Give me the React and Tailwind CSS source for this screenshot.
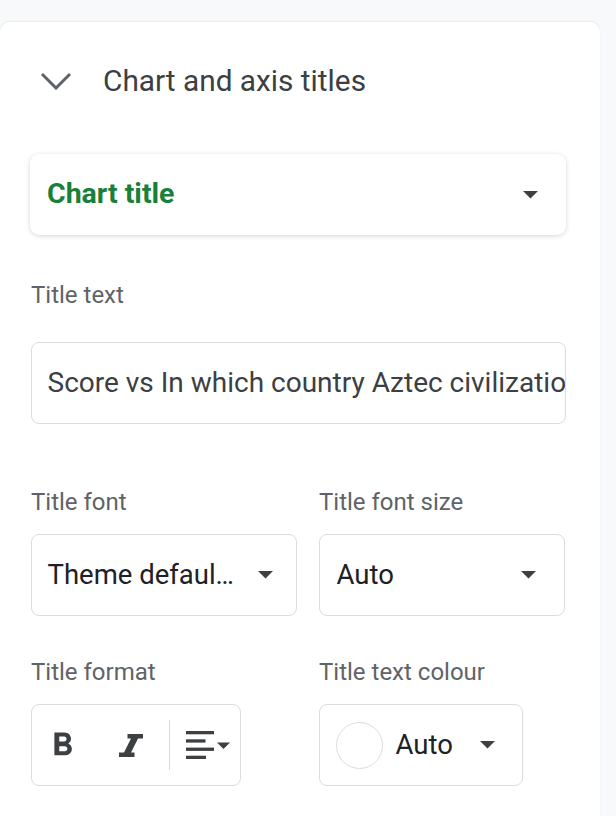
function Caret({ className = "" }) {
  return (
    <svg width="15" height="8" viewBox="0 0 15 8" className={className}>
      <path d="M0 0H15L7.5 7.5Z" fill="#3c4043" />
    </svg>
  );
}

export default function App() {
  return (
    <div className="min-h-[816px] w-[616px] bg-[#f8f9fa] pt-[22px] font-['Roboto',sans-serif]">
      <div className="w-[600px] h-[794px] bg-white rounded-t-[10px] shadow-[0_-1px_2px_rgba(0,0,0,0.06)] pl-[31px] pr-[34px] pt-[31px]">
        {/* Header */}
        <div className="flex items-center h-[56px]">
          <svg width="32" height="18" viewBox="0 0 32 18" className="ml-[9px]">
            <path d="M2 2L16 16L30 2" fill="none" stroke="#5f6368" strokeWidth="3" />
          </svg>
          <span className="ml-[31px] text-[29.8px] leading-[56px] text-[#3c4043]">Chart and axis titles</span>
        </div>

        {/* Chart title select */}
        <div className="-ml-px mt-[45px] w-[536px] h-[81px] rounded-[9px] bg-white shadow-[0_1px_4px_rgba(60,64,67,0.22)] flex items-center justify-between pl-[17px] pr-[28px]">
          <span className="text-[28.5px] font-bold text-[#188038]">Chart title</span>
          <Caret />
        </div>

        {/* Title text */}
        <div className="mt-[46px] h-[28px] leading-[28px] text-[24px] text-[#5f6368]">Title text</div>
        <div className="mt-[33px] w-[535px] h-[82px] rounded-[8px] border-[1.5px] border-[#dadce0] flex items-center pl-[15.5px] overflow-hidden">
          <span className="whitespace-nowrap text-[28px] text-[#3c4043]">Score vs In which country Aztec civilizatio</span>
        </div>

        {/* Font row */}
        <div className="mt-[64px] grid grid-cols-[266px_246px] gap-x-[22px]">
          <div>
            <div className="h-[28px] leading-[28px] text-[24px] text-[#5f6368]">Title font</div>
            <div className="mt-[18px] h-[82px] rounded-[8px] border-[1.5px] border-[#dadce0] flex items-center justify-between pl-[15.5px] pr-[23px]">
              <span className="whitespace-nowrap text-[27.5px] text-[#202124]">Theme defaul…</span>
              <Caret />
            </div>
          </div>
          <div>
            <div className="h-[28px] leading-[28px] text-[24px] text-[#5f6368]">Title font size</div>
            <div className="mt-[18px] h-[82px] rounded-[8px] border-[1.5px] border-[#dadce0] flex items-center justify-between pl-[16.5px] pr-[28px]">
              <span className="text-[27.5px] text-[#202124]">Auto</span>
              <Caret />
            </div>
          </div>
        </div>

        {/* Format row */}
        <div className="mt-[42px] grid grid-cols-[266px_246px] gap-x-[22px]">
          <div>
            <div className="h-[28px] leading-[28px] text-[24px] text-[#5f6368]">Title format</div>
            <div className="mt-[18px] w-[210px] h-[82px] rounded-[8px] border-[1.5px] border-[#dadce0] flex items-center">
              <svg width="39" height="39" viewBox="0 0 24 24" className="ml-[11px]">
                <path
                  fill="#3c4043"
                  d="M15.6 10.79c.97-.67 1.65-1.77 1.65-2.79 0-2.26-1.75-4-4-4H7v14h7.04c2.09 0 3.71-1.7 3.71-3.79 0-1.52-.86-2.82-2.15-3.42zM10 6.5h3c.83 0 1.5.67 1.5 1.5s-.67 1.5-1.5 1.5h-3v-3zm3.5 9H10v-3h3.5c.83 0 1.5.67 1.5 1.5s-.67 1.5-1.5 1.5z"
                />
              </svg>
              <svg width="24" height="23" viewBox="0 0 24 23" className="ml-[36.5px]">
                <path fill="#3c4043" d="M8.5 0H24V4.5H19L12 18.5H15.5V23H0V18.5H5L12 4.5H8.5Z" />
              </svg>
              <div className="ml-[26px] w-[1.5px] h-[50px] bg-[#dadce0]" />
              <svg width="47" height="28" viewBox="0 0 47 28" className="ml-[16px]">
                <rect x="0" y="0" width="28" height="3.3" fill="#3c4043" />
                <rect x="0" y="8.3" width="19.5" height="3.3" fill="#3c4043" />
                <rect x="0" y="16.6" width="28" height="3.3" fill="#3c4043" />
                <rect x="0" y="24.7" width="20" height="3.3" fill="#3c4043" />
                <path d="M31 11.5H44L37.5 18Z" fill="#3c4043" />
              </svg>
            </div>
          </div>
          <div>
            <div className="h-[28px] leading-[28px] text-[24px] text-[#5f6368]">Title text colour</div>
            <div className="mt-[18px] w-[204px] h-[82px] rounded-[8px] border-[1.5px] border-[#dadce0] flex items-center">
              <div className="ml-[15.5px] w-[47px] h-[47px] rounded-full border-[1.5px] border-[#dadce0] bg-white" />
              <span className="ml-[13px] text-[27.5px] text-[#202124]">Auto</span>
              <Caret className="ml-[27px]" />
            </div>
          </div>
        </div>
      </div>
    </div>
  );
}
